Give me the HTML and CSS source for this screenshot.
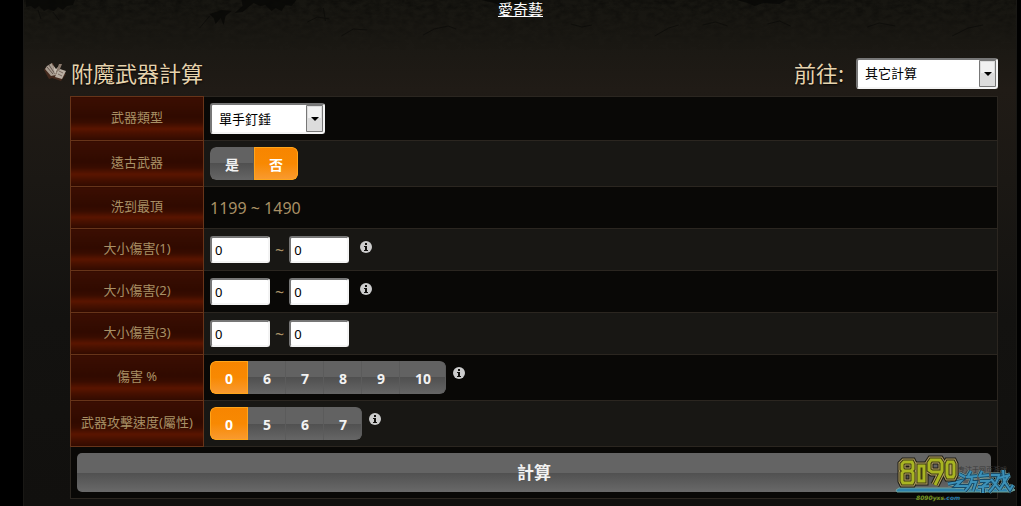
FILE: index.html
```html
<!DOCTYPE html>
<html lang="zh-Hant">
<head>
    <meta charset="UTF-8">
    <meta name="viewport" content="width=device-width, initial-scale=1.0">
    <title>附魔武器計算</title>
    <link rel="stylesheet" href="styles.css">
</head>
<body>
    <div class="page">
        <!-- cracked stone along the top -->
        <svg class="stone" viewBox="0 0 994 60" preserveAspectRatio="none" aria-hidden="true">
            <defs>
                <filter id="grain" x="0" y="0" width="1" height="1">
                    <feTurbulence type="fractalNoise" baseFrequency="0.12 0.2" numOctaves="4" seed="4"/>
                    <feColorMatrix values="0 0 0 0 0  0 0 0 0 0  0 0 0 0 0  2 0 0 0 -0.7"/>
                </filter>
                <linearGradient id="fade" x2="0" y2="1">
                    <stop offset="0" stop-color="#fff"/>
                    <stop offset="1" stop-color="#000"/>
                </linearGradient>
                <mask id="fadeout"><rect width="994" height="50" fill="url(#fade)"/></mask>
            </defs>
            <g mask="url(#fadeout)"><rect width="994" height="50" filter="url(#grain)" opacity="0.4"/></g>
            <g fill="#080806" opacity="0.8">
                <path d="M2 0h49l-2 5-6 1-4 4-5-3-4 4-6-2-4 2-5-5-4 3-4-3-5 1z"/>
                <path d="M218 0h55l-5 6-6-1-4 6-6-3-4 3-6-6-5 1-7-3-5 4-6 5-8 1 8-7z"/>
                <path d="M458 0h48l-9 4-11-1-8 3-7-3z"/>
                <path d="M714 0h50l-7 4-16-1-9 3-7-3z"/>
                <path d="M186 14l12-4 10 1-6 5-2 9-3-7-5 6-2-6z"/>
            </g>
            <g fill="none" stroke="#090907" opacity="0.6">
                <path d="M176 28l10-12M14 10l3 9M29 12l6 8M284 22l10-5 12 2M300 8l2 13"/>
                <path d="M318 36l12-7 14 1M400 35l11-6 14-3 8 3M548 24l11 3 10-2M632 36l14-8 10-3"/>
                <path d="M680 25l13-3 12 4M745 24l12-3 11 5M845 27l12-4 16 3M930 36l16-8 15-3"/>
            </g>
        </svg>

        <div class="top-link"><a href="#">愛奇藝</a></div>

        <div class="head">
            <h1>
                <svg class="book" viewBox="0 0 24 20" aria-hidden="true">
                    <path d="M1 8l2-3 7-4 4 11 4-2 5 2-5 7-9-3-3 1z" fill="#44291d"/>
                    <path d="M2 7l6 7 5-1L9 1 4 4z" fill="#a99d91"/>
                    <path d="M4 5l6 7M6 3l6 9" stroke="#665750" fill="none"/>
                    <path d="M10 3l2 10 4-9-3 3z" fill="#c8beb2"/>
                    <path d="M16 2l-4 11 5-6 2-5z" fill="#8b7a6d"/>
                    <path d="M14 10l3-3 6 2-4 8-7-2z" fill="#b9aea2"/>
                    <path d="M16 9l4 2M15 12l4 2" stroke="#796960" fill="none"/>
                </svg>
                附魔武器計算
            </h1>
            <div class="goto">
                <label for="goto">前往:</label>
                <select id="goto" class="goto-select">
                    <option>其它計算</option>
                </select>
            </div>
        </div>

        <form onsubmit="return false">
            <table class="calc">
                <tr>
                    <th><label for="type">武器類型</label></th>
                    <td>
                        <div class="row">
                            <select id="type" class="type-select">
                                <option>單手釘錘</option>
                            </select>
                        </div>
                    </td>
                </tr>
                <tr>
                    <th>遠古武器</th>
                    <td>
                        <div class="row">
                            <div class="group" role="radiogroup" aria-label="遠古武器">
                                <label><input type="radio" name="ancient"><span>是</span></label>
                                <label><input type="radio" name="ancient" checked><span>否</span></label>
                            </div>
                        </div>
                    </td>
                </tr>
                <tr>
                    <th>洗到最頂</th>
                    <td><div class="result">1199 ~ 1490</div></td>
                </tr>
                <tr>
                    <th><label for="min1">大小傷害(1)</label></th>
                    <td>
                        <div class="row range">
                            <input type="text" id="min1" value="0">~<input type="text" aria-label="最大傷害(1)" value="0">
                            <svg class="info" viewBox="0 0 12 12" aria-hidden="true"><circle cx="6" cy="6" r="6"/><path d="M5 2h2v2H5zM4 5h3v4h1v1H4V9h1V6H4z"/></svg>
                        </div>
                    </td>
                </tr>
                <tr>
                    <th><label for="min2">大小傷害(2)</label></th>
                    <td>
                        <div class="row range">
                            <input type="text" id="min2" value="0">~<input type="text" aria-label="最大傷害(2)" value="0">
                            <svg class="info" viewBox="0 0 12 12" aria-hidden="true"><circle cx="6" cy="6" r="6"/><path d="M5 2h2v2H5zM4 5h3v4h1v1H4V9h1V6H4z"/></svg>
                        </div>
                    </td>
                </tr>
                <tr>
                    <th><label for="min3">大小傷害(3)</label></th>
                    <td>
                        <div class="row range">
                            <input type="text" id="min3" value="0">~<input type="text" aria-label="最大傷害(3)" value="0">
                        </div>
                    </td>
                </tr>
                <tr>
                    <th>傷害 %</th>
                    <td>
                        <div class="row">
                            <div class="group" role="radiogroup" aria-label="傷害 %">
                                <label><input type="radio" name="damage" checked><span>0</span></label>
                                <label><input type="radio" name="damage"><span>6</span></label>
                                <label><input type="radio" name="damage"><span>7</span></label>
                                <label><input type="radio" name="damage"><span>8</span></label>
                                <label><input type="radio" name="damage"><span>9</span></label>
                                <label><input type="radio" name="damage"><span>10</span></label>
                            </div>
                            <svg class="info" viewBox="0 0 12 12" aria-hidden="true"><circle cx="6" cy="6" r="6"/><path d="M5 2h2v2H5zM4 5h3v4h1v1H4V9h1V6H4z"/></svg>
                        </div>
                    </td>
                </tr>
                <tr>
                    <th>武器攻擊速度(屬性)</th>
                    <td>
                        <div class="row">
                            <div class="group" role="radiogroup" aria-label="武器攻擊速度">
                                <label><input type="radio" name="speed" checked><span>0</span></label>
                                <label><input type="radio" name="speed"><span>5</span></label>
                                <label><input type="radio" name="speed"><span>6</span></label>
                                <label><input type="radio" name="speed"><span>7</span></label>
                            </div>
                            <svg class="info" viewBox="0 0 12 12" aria-hidden="true"><circle cx="6" cy="6" r="6"/><path d="M5 2h2v2H5zM4 5h3v4h1v1H4V9h1V6H4z"/></svg>
                        </div>
                    </td>
                </tr>
                <tr>
                    <td colspan="2"><button type="submit" class="submit">計算</button></td>
                </tr>
            </table>
        </form>
    </div>

    <!-- site logo in the corner -->
    <svg class="logo" viewBox="0 0 122 48" role="img" aria-label="8090游戏">
        <defs>
            <g id="digits">
                <path d="M10 7h8l1 2v5l-2 2 2 2v8l-1 2H9l-1-2v-8l2-2-2-2V9zM10 16h7"/>
                <path d="M25 11h5v15h-5z"/>
                <path d="M47 17H38l-3-2V8l2-3h9l2 3v8l-7 14"/>
                <path d="M54 7h5l1 2v11l-1 2h-5l-1-2V9z"/>
            </g>
            <path id="game" d="M65 19l6 3M54 29l13-3-5 5h12M77 16l-3 5M72 22l11-1M78 22c0 6-3 10-7 14M77 27h5l-3 9M88 16l-3 6M85 21l10-1M86 26h9l-6 5v7M84 32l11-1M97 20h8c-2 8-5 12-10 17M97 24l9 11M109 15l1 11 6 9 3-5M105 23l11-3M114 21l-8 13"/>
        </defs>
        <text class="logo-note" x="64" y="17">专注于网页游戏</text>
        <path class="logo-wave" d="M2 35l3-2h53l60 0 3 2-5 2H3z"/>
        <use href="#game" class="game-edge"/>
        <use href="#game" class="game-dark"/>
        <use href="#game" class="game-fill"/>
        <use href="#digits" class="num-shadow"/>
        <use href="#digits" class="num-edge"/>
        <use href="#digits" class="num-dark"/>
        <use href="#digits" class="num-fill"/>
        <text class="logo-url" x="22" y="45">8090yxs<tspan>.com</tspan></text>
    </svg>
</body>
</html>
```
FILE: styles.css
```css
* { box-sizing: border-box; }
body { margin: 0; background: #000; color: #a99065; font: 13px/20px "Noto Sans", "Noto Sans CJK TC", sans-serif; }
.page { position: relative; min-height: 100vh; margin: 0 4px 0 23px; padding: 0 18px 7px 19px; border: solid #191815; border-width: 0 1px; background: linear-gradient(#171611, #1a1813 40px, #201b16 90px, #1b1814 180px, #131210 320px, #11100e); }
.stone { position: absolute; top: 0; left: 0; width: 100%; height: 60px; }

.top-link { position: relative; height: 56px; text-align: center; font-size: 15px; line-height: 18px; }
.top-link a { color: #fff; }

.head { display: flex; justify-content: space-between; align-items: center; height: 34px; }
h1 { display: flex; align-items: center; gap: 4px; margin: 0; }
h1, .goto label { padding-bottom: 3px; color: #e6d3ad; font: 22px/30px "DFKai-SB", "BiauKai", "Noto Sans CJK TC", sans-serif; text-shadow: 0 1px 2px #000; }
.book { width: 24px; height: 20px; }
.goto { display: flex; align-items: center; gap: 12px; }

/* the arrow box sits at the right end of the select */
select {
    height: 31px; padding: 0 28px 0 7px;
    border: 2px solid #fff; border-color: #777 #f4f4f4 #f4f4f4 #777; border-radius: 3px;
    color: #000; font: inherit; appearance: none;
    background: #fff url("data:image/svg+xml,%3Csvg xmlns='http://www.w3.org/2000/svg' width='17' height='27'%3E%3Cpath d='M.5.5h16v26H.5z' fill='%23dcdcdc' stroke='%23777'/%3E%3Cpath d='M2 2h13v11H2z' fill='%23f1f1f1'/%3E%3Cpath d='M5 12h8l-4 4z'/%3E%3C/svg%3E") right center no-repeat;
}
.goto-select { width: 142px; }
.type-select { width: 115px; }

.calc { width: calc(100% - 27px); margin: 6px 0 0 27px; border-collapse: collapse; }
.calc th, .calc td { height: 42px; padding: 6px; border: 1px solid #2b2620; }
.calc th { width: 133px; padding: 2px 4px 5px; border-color: #673419; color: #a99065; font-weight: normal; background: linear-gradient(#3b0e02, #300a00 45%, #380c00 58%, #5a1500 73%, #4a1100 82%, #300a00); }
.calc td { background: #090806; }
.calc tr:nth-child(even) td { background: #181714; }
.row { display: flex; align-items: center; }
.result { font-size: 16px; line-height: 28px; }

.range { gap: 5px; font-size: 16px; }
.range input { width: 60px; height: 27px; padding: 0 3px; border: 2px solid #fff; border-color: #777 #f4f4f4 #f4f4f4 #777; border-radius: 3px; background: #fff; color: #000; font: 13px/20px "Noto Sans", sans-serif; }
.info { align-self: flex-start; width: 12px; height: 12px; margin: 6px 0 0 7px; }
.range .info { margin: 5px 0 0 6px; }
.info circle { fill: #ccc; }
.info path { fill: #11100e; }

.group { display: flex; overflow: hidden; border-radius: 6px; }
.group label { position: relative; cursor: pointer; }
.group input { position: absolute; inset: 0; width: 100%; height: 100%; margin: 0; opacity: 0; }
.group span { display: block; padding: 2px 15px 0; color: #f2f2f2; font-size: 14px; font-weight: bold; line-height: 31px; background: linear-gradient(#626262 50%, #505050 50%, #666); box-shadow: inset -1px 0 #5b5b5b; }
.group input:checked + span { color: #fff; background: linear-gradient(#f78500, #f88902 50%, #f99b32); box-shadow: inset 0 0 0 1px #ffa51b; }
.group label:first-child span { border-radius: 6px 0 0 6px; }
.group label:last-child span { border-radius: 0 6px 6px 0; }

.submit { display: block; width: 100%; height: 39px; padding: 0; border: 0; border-radius: 5px; color: #f2f2f2; font: bold 17px/39px "Noto Sans", "Noto Sans CJK TC", sans-serif; background: linear-gradient(#646464 50%, #505050 50%, #696969); }

.logo { position: absolute; top: 455px; right: 5px; width: 122px; height: 48px; fill: none; }
.logo-note { fill: #3a3a3a; font: 7px "Noto Sans CJK SC", sans-serif; }
.logo-wave { fill: #2e83ac; stroke: #71a49a; }
.game-edge { stroke: #82aaa0; stroke-width: 5px; stroke-linejoin: round; }
.game-dark { stroke: #174b69; stroke-width: 4px; }
.game-fill { stroke: #3c91b8; stroke-width: 2px; }
.num-shadow { stroke: #1d1b12; stroke-width: 9px; }
.num-edge { stroke: #b3a064; stroke-width: 7px; }
.num-dark { stroke: #3f3a15; stroke-width: 5px; }
.num-fill { stroke: #a9b522; stroke-width: 3px; }
.logo-url { fill: #759723; font: italic bold 6px "DejaVu Sans", sans-serif; }
.logo-url tspan { fill: #267bab; }
```
